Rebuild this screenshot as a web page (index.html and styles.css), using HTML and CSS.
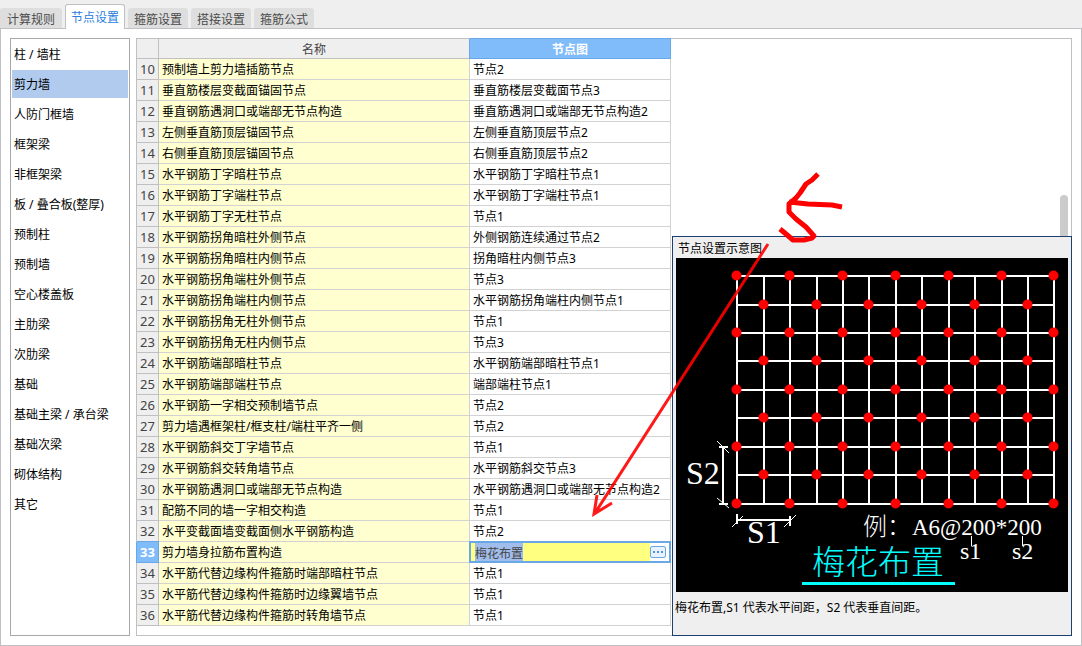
FILE: index.html
```html
<!DOCTYPE html>
<html lang="zh-CN">
<head>
<meta charset="utf-8">
<title>节点设置</title>
<link rel="stylesheet" href="styles.css">
</head>
<body>
<div class="app">
  <nav class="tabs">
    <button class="tab tab-first">计算规则</button>
    <button class="tab tab-active">节点设置</button>
    <button class="tab">箍筋设置</button>
    <button class="tab">搭接设置</button>
    <button class="tab">箍筋公式</button>
  </nav>
  <main class="panel">
    <aside class="sidebar">
      <button class="item">柱 / 墙柱</button>
      <button class="item item-selected">剪力墙</button>
      <button class="item">人防门框墙</button>
      <button class="item">框架梁</button>
      <button class="item">非框架梁</button>
      <button class="item">板 / 叠合板(整厚)</button>
      <button class="item">预制柱</button>
      <button class="item">预制墙</button>
      <button class="item">空心楼盖板</button>
      <button class="item">主肋梁</button>
      <button class="item">次肋梁</button>
      <button class="item">基础</button>
      <button class="item">基础主梁 / 承台梁</button>
      <button class="item">基础次梁</button>
      <button class="item">砌体结构</button>
      <button class="item">其它</button>
    </aside>
    <section class="frame">
      <table class="grid">
        <colgroup><col class="col-no"><col class="col-name"><col class="col-node"></colgroup>
        <thead>
          <tr><th></th><th>名称</th><th class="active">节点图</th></tr>
        </thead>
        <tbody>
          <tr><th>10</th><td>预制墙上剪力墙插筋节点</td><td>节点2</td></tr>
          <tr><th>11</th><td>垂直筋楼层变截面锚固节点</td><td>垂直筋楼层变截面节点3</td></tr>
          <tr><th>12</th><td>垂直钢筋遇洞口或端部无节点构造</td><td>垂直筋遇洞口或端部无节点构造2</td></tr>
          <tr><th>13</th><td>左侧垂直筋顶层锚固节点</td><td>左侧垂直筋顶层节点2</td></tr>
          <tr><th>14</th><td>右侧垂直筋顶层锚固节点</td><td>右侧垂直筋顶层节点2</td></tr>
          <tr><th>15</th><td>水平钢筋丁字暗柱节点</td><td>水平钢筋丁字暗柱节点1</td></tr>
          <tr><th>16</th><td>水平钢筋丁字端柱节点</td><td>水平钢筋丁字端柱节点1</td></tr>
          <tr><th>17</th><td>水平钢筋丁字无柱节点</td><td>节点1</td></tr>
          <tr><th>18</th><td>水平钢筋拐角暗柱外侧节点</td><td>外侧钢筋连续通过节点2</td></tr>
          <tr><th>19</th><td>水平钢筋拐角暗柱内侧节点</td><td>拐角暗柱内侧节点3</td></tr>
          <tr><th>20</th><td>水平钢筋拐角端柱外侧节点</td><td>节点3</td></tr>
          <tr><th>21</th><td>水平钢筋拐角端柱内侧节点</td><td>水平钢筋拐角端柱内侧节点1</td></tr>
          <tr><th>22</th><td>水平钢筋拐角无柱外侧节点</td><td>节点1</td></tr>
          <tr><th>23</th><td>水平钢筋拐角无柱内侧节点</td><td>节点3</td></tr>
          <tr><th>24</th><td>水平钢筋端部暗柱节点</td><td>水平钢筋端部暗柱节点1</td></tr>
          <tr><th>25</th><td>水平钢筋端部端柱节点</td><td>端部端柱节点1</td></tr>
          <tr><th>26</th><td>水平钢筋一字相交预制墙节点</td><td>节点2</td></tr>
          <tr><th>27</th><td>剪力墙遇框架柱/框支柱/端柱平齐一侧</td><td>节点2</td></tr>
          <tr><th>28</th><td>水平钢筋斜交丁字墙节点</td><td>节点1</td></tr>
          <tr><th>29</th><td>水平钢筋斜交转角墙节点</td><td>水平钢筋斜交节点3</td></tr>
          <tr><th>30</th><td>水平钢筋遇洞口或端部无节点构造</td><td>水平钢筋遇洞口或端部无节点构造2</td></tr>
          <tr><th>31</th><td>配筋不同的墙一字相交构造</td><td>节点1</td></tr>
          <tr><th>32</th><td>水平变截面墙变截面侧水平钢筋构造</td><td>节点2</td></tr>
          <tr><th class="active">33</th><td>剪力墙身拉筋布置构造</td><td class="editing"><div class="editor"><input class="editor-input" type="text" value="梅花布置" aria-label="节点图"><button class="editor-more" aria-label="选择节点图"><svg width="10" height="2" viewBox="0 0 10 2"><path d="M0 0h2v2H0zM4 0h2v2H4zM8 0h2v2H8z" fill="#4f93d2"/></svg></button></div></td></tr>
          <tr><th>34</th><td>水平筋代替边缘构件箍筋时端部暗柱节点</td><td>节点1</td></tr>
          <tr><th>35</th><td>水平筋代替边缘构件箍筋时边缘翼墙节点</td><td>节点1</td></tr>
          <tr><th>36</th><td>水平筋代替边缘构件箍筋时转角墙节点</td><td>节点1</td></tr>
        </tbody>
      </table>
      <div class="scroll-thumb"></div>
      <div class="popup">
        <h2 class="popup-title">节点设置示意图</h2>
        <svg class="diagram" viewBox="676 258 392 334">
          <rect x="676" y="258" width="392" height="334" fill="#000"/>
          <path stroke="#fff" stroke-width="2" fill="none" d="M736 276H1055M736 305H1055M736 333H1055M736 361H1055M736 390H1055M736 418H1055M736 447H1055M736 475H1055M736 504H1055M737 276V504M764 276V504M790 276V504M817 276V504M843 276V504M869 276V504M896 276V504M922 276V504M949 276V504M975 276V504M1002 276V504M1028 276V504M1054 276V504"/>
          <defs>
            <g id="outer"><circle cx="736.500" cy="0" r="5"/><circle cx="789.500" cy="0" r="5"/><circle cx="842.500" cy="0" r="5"/><circle cx="895.500" cy="0" r="5"/><circle cx="948.500" cy="0" r="5"/><circle cx="1001.500" cy="0" r="5"/><circle cx="1053.500" cy="0" r="5"/></g>
            <g id="inner"><circle cx="763.500" cy="0" r="5"/><circle cx="816.500" cy="0" r="5"/><circle cx="868.500" cy="0" r="5"/><circle cx="921.500" cy="0" r="5"/><circle cx="974.500" cy="0" r="5"/><circle cx="1027.500" cy="0" r="5"/></g>
          </defs>
          <g fill="#f00">
            <use href="#outer" y="275.500"/><use href="#inner" y="304.500"/>
            <use href="#outer" y="332.500"/><use href="#inner" y="360.500"/>
            <use href="#outer" y="389.500"/><use href="#inner" y="417.500"/>
            <use href="#outer" y="446.500"/><use href="#inner" y="474.500"/>
            <use href="#outer" y="503.500"/>
          </g>
          <path stroke="#fff" stroke-width="2" fill="none" d="M723 446V504M719 447H728M719 504H728M737 514V524M790 516V526M737 520H790"/>
          <path stroke="#fff" fill="none" d="M717 441L729 453M717 498L729 508M732 527L743 516M784 527L796 515M971.500 536V546M1022.500 536V546"/>
          <path stroke="#0ff" stroke-width="3" d="M802 583.500H955"/>
          <g class="dim">
            <text x="686" y="484">S2</text>
            <text x="747" y="543">S1</text>
          </g>
          <g class="sample">
            <text x="863" y="535">例：</text>
            <text class="sample-value" x="912" y="535">A6@200*200</text>
            <text x="960" y="559">s1</text>
            <text x="1012" y="559">s2</text>
          </g>
          <text class="caption" x="812" y="574">梅花布置</text>
        </svg>
        <p class="popup-note">梅花布置,S1 代表水平间距，S2 代表垂直间距。</p>
      </div>
    </section>
  </main>
  <svg class="ink" width="1082" height="646" viewBox="0 0 1082 646" fill="none" stroke="#f00">
    <path stroke-width="5" stroke-linejoin="round" d="M818 174L812 180L806 184L800 193L796 198L789 204V212L796 219L806 227L814 236L812 238L804 240H793L786 234L780 229M789 202L808 204L832 205L842 207"/>
    <path stroke-width="3" opacity="0.900" d="M768 244L595 513M597 495L594 514L612 503"/>
  </svg>
</div>
</body>
</html>
```
FILE: styles.css
```css
* {
  box-sizing: border-box;
}

body {
  margin: 0;
  background: #efefef;
  color: #000;
  font: 12px/20px "Noto Sans", "Noto Sans CJK SC", sans-serif;
}

button,
input {
  margin: 0;
  padding: 0;
  border: 0;
  background: none;
  color: inherit;
  font: inherit;
}

.app {
  position: relative;
  display: flex;
  flex-direction: column;
  min-height: 100vh;
  padding-top: 4px;
}

.tabs {
  position: relative;
  display: flex;
  align-items: flex-end;
  gap: 3px;
  height: 24px;
}

.tab {
  height: 20px;
  padding: 2px 6px 0;
  border-radius: 3px 3px 0 0;
  background: #dedede;
  color: #4a4a4a;
}

.tab-first {
  padding: 2px 7px 0;
}

.tab-active {
  height: 25px;
  margin-bottom: -1px;
  padding: 2px 5px 0;
  border: 1px solid #c0c0c4;
  border-bottom: 0;
  background: #fff;
  color: #2a80e0;
}

.panel {
  display: flex;
  flex: 1;
  gap: 6px;
  padding: 9px;
  border: 1px solid #c0c0c4;
  background: #fff;
}

.sidebar {
  display: flex;
  flex-direction: column;
  gap: 2px;
  width: 120px;
  padding: 1px;
  border: 1px solid #a8a8a8;
}

.item {
  height: 28px;
  padding: 2px 2px 0;
  text-align: left;
  white-space: nowrap;
}

.item-selected {
  background: #b0cbed;
}

.frame {
  position: relative;
  flex: 1;
  border: 1px solid #c0c0c0;
}

.grid {
  width: 534px;
  border-spacing: 0;
  table-layout: fixed;
}

.col-no {
  width: 22px;
}

.col-name {
  width: 311px;
}

.col-node {
  width: 201px;
}

.grid th,
.grid td {
  height: 21px;
  padding: 2px 3px 0;
  border-right: 1px solid #d2d2d2;
  border-bottom: 1px solid #d2d2d2;
  line-height: 18px;
  white-space: nowrap;
}

.grid th {
  padding: 0;
  border-color: #c0c0c0;
  background: #efefef;
  color: #444;
  font-weight: 400;
}

.grid thead th {
  height: 20px;
  padding-top: 2px;
  line-height: 17px;
}

.grid tbody th {
  font-size: 13px;
}

.grid td:nth-child(2) {
  background: #ffffcf;
}

.grid th.active {
  position: relative;
  border-color: #69a7e6;
  background: #80bbfa;
  box-shadow: 0 -1px #69a7e6, -1px 0 #69a7e6;
  color: #fff;
  font-weight: 700;
}

.grid td.editing {
  position: relative;
  padding: 0;
}

.editor {
  position: absolute;
  inset: -1px -1px -1px -1px;
  display: flex;
  align-items: center;
  border: 2px solid #69a7e6;
  background: #fff;
}

.editor-input {
  flex: 1;
  min-width: 0;
  height: 18px;
  padding: 2px 0 0 4px;
  background: linear-gradient(#a0bdec, #a0bdec) 4px 0 / 48px 100% no-repeat #ffff80;
  color: #444;
  line-height: 16px;
}

.editor-more {
  display: flex;
  align-items: center;
  justify-content: center;
  width: 16px;
  height: 12px;
  margin-right: 3px;
  border: 1px solid #69a7e6;
  border-radius: 2px;
  background: #e8f3ff;
}

.scroll-thumb {
  position: absolute;
  top: 156px;
  right: 3px;
  bottom: 3px;
  width: 8px;
  border-radius: 4px;
  background: #cbcbcb;
}

.popup {
  position: absolute;
  right: -1px;
  bottom: -1px;
  width: 400px;
  height: 400px;
  border: 1px solid #1f3f73;
  background: #efefef;
}

.popup-title {
  height: 21px;
  margin: 0;
  padding: 2px 5px 0;
  font-size: 12px;
  font-weight: 400;
  line-height: 19px;
}

.diagram {
  display: block;
  width: 392px;
  height: 334px;
  margin: 0 3px;
}

.dim {
  fill: #fff;
  font: 32px "Liberation Serif", serif;
}

.sample {
  fill: #fff;
  font: 300 24px "Liberation Serif", "Noto Sans CJK SC", serif;
}

.sample-value {
  font-size: 23px;
}

.caption {
  fill: #0ff;
  font: 300 33px "Noto Sans CJK SC", sans-serif;
}

.popup-note {
  margin: 0;
  padding: 6px 2px;
}

.ink {
  position: absolute;
  top: 0;
  left: 0;
  pointer-events: none;
}
```
